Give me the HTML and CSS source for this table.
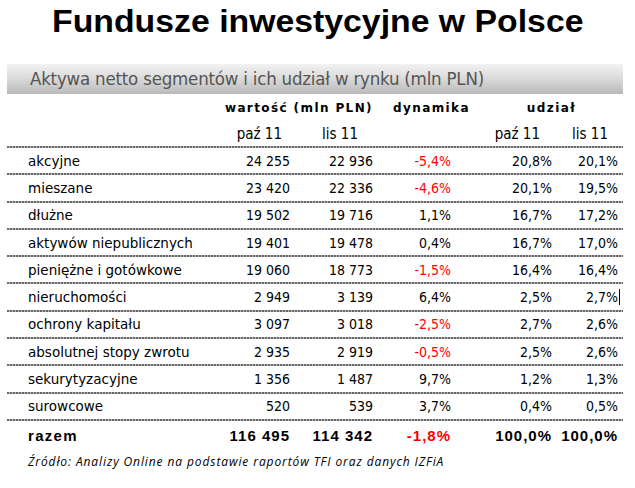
FILE: index.html
```html
<!DOCTYPE html>
<html lang="pl">
<head>
<meta charset="utf-8">
<title>Fundusze inwestycyjne w Polsce</title>
<link rel="stylesheet" href="styles.css">
</head>
<body>
<div class="page">
  <h1 class="title"><span class="title-text">Fundusze inwestycyjne w Polsce</span></h1>
  <div class="bar">Aktywa netto segmentów i ich udział w rynku (mln PLN)</div>
  <div class="table">
    <div class="row head">
      <span class="h-value">wartość (mln PLN)</span>
      <span class="h-dyn">dynamika</span>
      <span class="h-share">udział</span>
    </div>
    <div class="row sub">
      <span class="c1 s1">paź 11</span>
      <span class="c2 s2">lis 11</span>
      <span class="c4 s4">paź 11</span>
      <span class="c5 s5">lis 11</span>
    </div>
    <div class="line"></div>
    <div class="row data"><span class="lbl">akcyjne</span><span>24 255</span><span>22 936</span><span class="neg">-5,4%</span><span>20,8%</span><span>20,1%</span></div>
    <div class="line"></div>
    <div class="row data"><span class="lbl">mieszane</span><span>23 420</span><span>22 336</span><span class="neg">-4,6%</span><span>20,1%</span><span>19,5%</span></div>
    <div class="line"></div>
    <div class="row data"><span class="lbl">dłużne</span><span>19 502</span><span>19 716</span><span>1,1%</span><span>16,7%</span><span>17,2%</span></div>
    <div class="line"></div>
    <div class="row data"><span class="lbl">aktywów niepublicznych</span><span>19 401</span><span>19 478</span><span>0,4%</span><span>16,7%</span><span>17,0%</span></div>
    <div class="line"></div>
    <div class="row data"><span class="lbl">pieniężne i gotówkowe</span><span>19 060</span><span>18 773</span><span class="neg">-1,5%</span><span>16,4%</span><span>16,4%</span></div>
    <div class="line"></div>
    <div class="row data"><span class="lbl">nieruchomości</span><span>2 949</span><span>3 139</span><span>6,4%</span><span>2,5%</span><span class="cursor">2,7%</span></div>
    <div class="line"></div>
    <div class="row data"><span class="lbl">ochrony kapitału</span><span>3 097</span><span>3 018</span><span class="neg">-2,5%</span><span>2,7%</span><span>2,6%</span></div>
    <div class="line"></div>
    <div class="row data"><span class="lbl">absolutnej stopy zwrotu</span><span>2 935</span><span>2 919</span><span class="neg">-0,5%</span><span>2,5%</span><span>2,6%</span></div>
    <div class="line"></div>
    <div class="row data"><span class="lbl">sekurytyzacyjne</span><span>1 356</span><span>1 487</span><span>9,7%</span><span>1,2%</span><span>1,3%</span></div>
    <div class="line"></div>
    <div class="row data"><span class="lbl">surowcowe</span><span>520</span><span>539</span><span>3,7%</span><span>0,4%</span><span>0,5%</span></div>
    <div class="line"></div>
    <div class="row data total"><span class="lbl">razem</span><span>116 495</span><span>114 342</span><span class="neg">-1,8%</span><span>100,0%</span><span>100,0%</span></div>
  </div>
  <p class="source">Źródło: Analizy Online na podstawie raportów TFI oraz danych IZFiA</p>
</div>
</body>
</html>
```
FILE: styles.css
```css
html, body {
  margin: 0;
  padding: 0;
  background: #ffffff;
}
.page {
  width: 635px;
  height: 488px;
  overflow: hidden;
  color: #000;
}
.title {
  margin: 0;
  height: 56px;
  padding-top: 4px;
  box-sizing: border-box;
  text-align: center;
  font-family: "Liberation Sans", Arial, sans-serif;
  font-weight: bold;
  font-size: 31px;
  line-height: 36px;
}
.title-text {
  display: inline-block;
  transform: scaleX(1.09);
}
.bar {
  margin: 8px 12px 0 7px;
  height: 30px;
  padding-left: 23px;
  background: linear-gradient(to bottom, #f2f2f2 0%, #dcdcdc 45%, #b9b9b9 100%);
  color: #555;
  font-family: "DejaVu Sans Condensed", "DejaVu Sans", sans-serif;
  font-size: 18.5px;
  line-height: 30px;
  letter-spacing: -0.2px;
}
.table {
  margin: 0 12px 0 7px;
}
.row {
  display: grid;
  grid-template-columns: 203px 80px 83px 78px 101px 66px;
  align-items: center;
}
.head {
  height: 27px;
  font-family: "DejaVu Sans", sans-serif;
  font-weight: bold;
  font-size: 12px;
  letter-spacing: 1.4px;
}
.h-value {
  grid-column: 2 / 4;
  justify-self: end;
  margin-right: 0;
}
.h-dyn {
  grid-column: 4 / 5;
  justify-self: start;
  margin-left: 20px;
}
.h-share {
  grid-column: 5 / 7;
  justify-self: end;
  margin-right: 42px;
}
.sub {
  height: 25px;
  font-family: "DejaVu Sans Condensed", "DejaVu Sans", sans-serif;
  font-size: 15px;
}
.sub span {
  justify-self: end;
}
.c1 { grid-column: 2; }
.c2 { grid-column: 3; }
.c4 { grid-column: 5; }
.c5 { grid-column: 6; }
.s1 { margin-right: 8px; }
.s2 { margin-right: 15px; }
.s4 { margin-right: 12px; }
.s5 { margin-right: 10px; }
.line {
  height: 2px;
  background: repeating-linear-gradient(to right, #666 0 2px, #bbb 2px 3px);
}
.data {
  height: 25.3px;
  font-family: "DejaVu Sans Condensed", "DejaVu Sans", sans-serif;
  font-size: 14px;
}
.data span {
  justify-self: end;
}
.data .lbl {
  justify-self: start;
  padding-left: 21px;
  font-family: "DejaVu Sans", sans-serif;
  font-size: 13.5px;
}
.neg {
  color: #ff0000;
}
.cursor {
  border-right: 1px solid #000;
  margin-right: -2px;
  padding-right: 1px;
}
.data.total {
  height: 30px;
  font-family: "Liberation Sans", Arial, sans-serif;
  font-weight: bold;
  font-size: 15px;
  letter-spacing: 1px;
}
.data.total .lbl {
  font-family: "Liberation Sans", Arial, sans-serif;
  font-size: 15px;
  letter-spacing: 1.3px;
}
.source {
  margin: 0 0 0 28px;
  font-family: "Open Sans", sans-serif;
  font-style: italic;
  font-size: 12px;
  letter-spacing: 0.9px;
  line-height: 22px;
}
```
